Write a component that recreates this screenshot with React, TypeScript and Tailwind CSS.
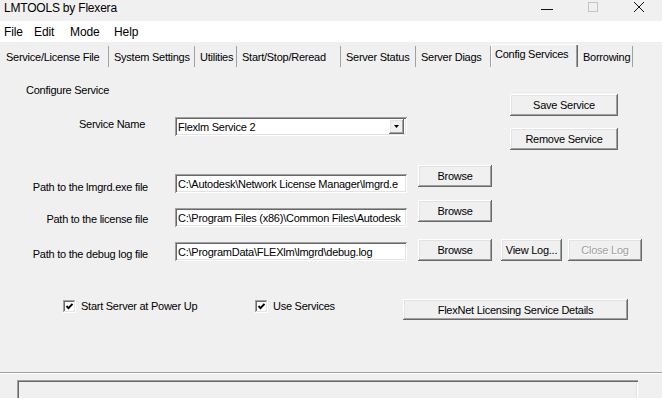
const FONT = "font-['Liberation_Sans',Arial,sans-serif]";

const RAISED =
  "bg-[#f0f0f0] shadow-[inset_-1px_-1px_0_#696969,inset_1px_1px_0_#ffffff,inset_-2px_-2px_0_#a0a0a0,inset_2px_2px_0_#e3e3e3]";
const SUNKEN =
  "bg-white shadow-[inset_1px_1px_0_#a0a0a0,inset_-1px_-1px_0_#ffffff,inset_2px_2px_0_#696969,inset_-2px_-2px_0_#e3e3e3]";

const TABS = [
  { label: "Service/License File", w: "w-[108px]" },
  { label: "System Settings", w: "w-[86px]" },
  { label: "Utilities", w: "w-[42px]" },
  { label: "Start/Stop/Reread", w: "w-[104px]" },
  { label: "Server Status", w: "w-[75px]" },
  { label: "Server Diags", w: "w-[75px]" },
  { label: "Config Services", w: "w-[87px]", active: true },
  { label: "Borrowing", w: "w-[55px]" },
];

function Button({
  children,
  className = "",
  disabled = false,
}: {
  children: React.ReactNode;
  className?: string;
  disabled?: boolean;
}) {
  return (
    <div
      className={`${RAISED} flex shrink-0 items-center justify-center leading-[14px] ${
        disabled ? "text-[#a0a0a0] [text-shadow:1px_1px_0_#ffffff]" : "text-black"
      } ${className}`}
    >
      {children}
    </div>
  );
}

// path boxes only show what fits, like the native edit control
function Field({ value, className = "" }: { value: string; className?: string }) {
  return (
    <div
      className={`${SUNKEN} flex h-[19px] w-[232px] shrink-0 items-center overflow-hidden whitespace-nowrap pl-[3px] pr-[2px] leading-[14px] ${className}`}
    >
      {value}
    </div>
  );
}

function Checkbox() {
  return (
    <svg width="13" height="13" viewBox="0 0 13 13" className="shrink-0">
      <rect x="0" y="0" width="13" height="13" fill="#ffffff" />
      <rect x="0" y="0" width="12" height="12" fill="#a0a0a0" />
      <rect x="1" y="1" width="11" height="11" fill="#e3e3e3" />
      <rect x="1" y="1" width="10" height="10" fill="#696969" />
      <rect x="2" y="2" width="9" height="9" fill="#ffffff" />
      <polyline points="3.5,6 5.5,8.2 9.5,3.8" fill="none" stroke="#000" strokeWidth="1.9" />
    </svg>
  );
}

export default function App() {
  return (
    <div
      className={`${FONT} h-[398px] w-[662px] overflow-hidden bg-[#f0f0f0] text-[11px] tracking-[-0.25px] text-black`}
    >
      {/* title bar */}
      <div className="flex h-[21px] items-start justify-between">
        <span className="pl-[4px] pt-[1px] text-[12px] leading-[14px] tracking-[-0.2px]">LMTOOLS by Flexera</span>
        <div className="flex">
          <div className="flex h-[21px] w-[46px] justify-center pt-[2px]">
            <svg width="12" height="10" viewBox="0 0 12 10">
              <line x1="0" y1="7.5" x2="12" y2="7.5" stroke="#111" strokeWidth="1" />
            </svg>
          </div>
          <div className="flex h-[21px] w-[46px] justify-center pt-[2px]">
            <svg width="10" height="10" viewBox="0 0 10 10">
              <rect x="0.5" y="0.5" width="9" height="9" fill="none" stroke="#c4c4c4" strokeWidth="1" />
            </svg>
          </div>
          <div className="flex h-[21px] w-[46px] justify-center pt-[2px]">
            <svg width="10" height="10" viewBox="0 0 10 10">
              <path d="M0 0L10 10M10 0L0 10" stroke="#111" strokeWidth="1" />
            </svg>
          </div>
        </div>
      </div>

      {/* menu bar */}
      <div className="flex h-[21px] items-center bg-white pl-[4px] text-[12px] tracking-[-0.1px]">
        <span className="w-[30px]">File</span>
        <span className="w-[36px]">Edit</span>
        <span className="w-[44px]">Mode</span>
        <span>Help</span>
      </div>

      {/* tabs */}
      <div className="mt-[2px] flex h-[23px] items-end pl-[1px]">
        {TABS.map((t) =>
          t.active ? (
            <div
              key={t.label}
              className={`${t.w} h-[23px] shrink-0 whitespace-nowrap border-l border-t border-l-white border-t-white pl-[3px] pt-[2px] leading-[14px] shadow-[inset_-1px_0_0_#696969,inset_-2px_0_0_#a0a0a0]`}
            >
              {t.label}
            </div>
          ) : (
            <div
              key={t.label}
              className={`${t.w} flex h-[21px] shrink-0 items-center whitespace-nowrap border-r border-r-[#a0a0a0] pl-[5px] leading-[14px]`}
            >
              {t.label}
            </div>
          )
        )}
      </div>

      {/* config services panel */}
      <div className="h-[305px]">
        <div className="flex">
          <div className="w-[510px]">
            <div className="pl-[26px] pt-[16px] leading-[14px]">Configure Service</div>
            <div className="mt-[20px] flex items-start">
              <span className="w-[145px] text-right leading-[14px]">Service Name</span>
              <div className={`${SUNKEN} ml-[30px] flex h-[19px] w-[232px] items-center justify-between pl-[3px] pr-[3px] leading-[14px]`}>
                <span>Flexlm Service 2</span>
                <div className={`${RAISED} flex h-[15px] w-[15px] items-center justify-center`}>
                  <svg width="5" height="3" viewBox="0 0 5 3">
                    <polygon points="0,0 5,0 2.5,3" fill="#000" />
                  </svg>
                </div>
              </div>
            </div>
          </div>
          <div className="flex flex-col pt-[27px]">
            <Button className="h-[22px] w-[108px]">Save Service</Button>
            <Button className="mt-[12px] h-[22px] w-[108px]">Remove Service</Button>
          </div>
        </div>

        <div className="mt-[15px] flex items-start">
          <span className="mt-[15px] w-[148px] text-right leading-[14px]">Path to the lmgrd.exe file</span>
          <Field className="ml-[27px] mt-[9px]" value={"C:\\Autodesk\\Network License Manager\\lmgrd.e"} />
          <Button className="ml-[11px] h-[22px] w-[74px]">Browse</Button>
        </div>

        <div className="mt-[6px] flex items-start">
          <span className="mt-[12px] w-[148px] text-right leading-[14px]">Path to the license file</span>
          <Field className="ml-[27px] mt-[8px]" value={"C:\\Program Files (x86)\\Common Files\\Autodesk"} />
          <Button className="ml-[11px] h-[22px] w-[74px]">Browse</Button>
        </div>

        <div className="mt-[12px] flex items-start">
          <span className="mt-[8px] w-[148px] text-right leading-[14px]">Path to the debug log file</span>
          <Field className="ml-[27px] mt-[3px]" value={"C:\\ProgramData\\FLEXlm\\lmgrd\\debug.log"} />
          <Button className="ml-[11px] h-[22px] w-[74px]">Browse</Button>
          <Button className="ml-[9px] h-[22px] w-[61px]">View Log...</Button>
          <Button className="ml-[6px] h-[22px] w-[74px]" disabled>
            Close Log
          </Button>
        </div>

        <div className="mt-[38px] flex items-start">
          <div className="ml-[63px] flex w-[192px] items-start">
            <div className="mt-[1px]">
              <Checkbox />
            </div>
            <span className="ml-[5px] leading-[14px]">Start Server at Power Up</span>
          </div>
          <div className="flex w-[148px] items-start">
            <div className="mt-[1px]">
              <Checkbox />
            </div>
            <span className="ml-[5px] leading-[14px]">Use Services</span>
          </div>
          <Button className="h-[21px] w-[225px]">FlexNet Licensing Service Details</Button>
        </div>
      </div>

      {/* divider + status box */}
      <div className="h-[2px] border-t border-b border-t-[#a0a0a0] border-b-white" />
      <div className="pl-[17px] pt-[6px]">
        <div className="h-[30px] w-[621px] shadow-[inset_1px_1px_0_#a0a0a0,inset_2px_2px_0_#696969,inset_-1px_-1px_0_#ffffff,inset_-2px_-2px_0_#e3e3e3]" />
      </div>
    </div>
  );
}
